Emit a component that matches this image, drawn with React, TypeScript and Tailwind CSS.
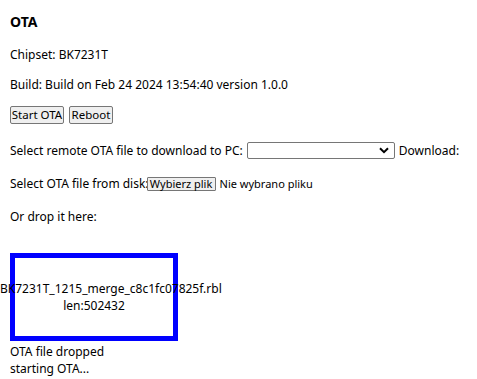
import React from 'react';

const App: React.FC = () => {
  return (
    <div
      className="min-h-[379px] w-[477px] overflow-hidden bg-white px-[10px] text-[12px] leading-[17px] text-black"
      style={{ fontFamily: '"Noto Sans", Arial, sans-serif' }}
    >
      <h3 className="pt-[12px] text-[14px] font-bold leading-[20px]">OTA</h3>

      <p className="mt-[14px]">Chipset: BK7231T</p>
      <p className="mt-[13px]">Build: Build on Feb 24 2024 13:54:40 version 1.0.0</p>

      <div className="mt-[13px] flex h-[18px] gap-[5px]">
        <button className="h-[18px] w-[54px] whitespace-nowrap rounded-[2px] border border-[#767676] bg-[#efefef] p-0 text-[11.5px] leading-[16px]">
          Start OTA
        </button>
        <button className="h-[18px] w-[44px] whitespace-nowrap rounded-[2px] border border-[#767676] bg-[#efefef] p-0 text-[11.5px] leading-[16px]">
          Reboot
        </button>
      </div>

      <div className="mt-[17px] flex h-[18px] items-center whitespace-nowrap">
        <span>Select remote OTA file to download to PC:</span>
        <div className="ml-[4px] flex h-[17px] w-[148px] items-center justify-end rounded-[2px] border border-[#767676] bg-white pr-[5px]">
          <svg width="10" height="7" viewBox="0 0 10 7" fill="none">
            <path d="M1 1.2 L5 5.2 L9 1.2" stroke="#000" strokeWidth="2" />
          </svg>
        </div>
        <span className="ml-[4px]">Download:</span>
      </div>

      <div className="mt-[16px] flex h-[17px] items-center whitespace-nowrap">
        <span>Select OTA file from disk:</span>
        <button className="ml-[-2px] h-[14px] w-[69px] whitespace-nowrap rounded-[1px] border border-[#767676] bg-[#efefef] p-0 text-[11px] leading-[12px]">
          Wybierz plik
        </button>
        <span className="ml-[4px] text-[11px]">Nie wybrano pliku</span>
      </div>

      <p className="mt-[16px]">Or drop it here:</p>

      <div className="mt-[28px] flex h-[88px] w-[168px] flex-col items-center justify-center border-[5px] border-[#0000ff] text-center">
        <div className="ml-[-15px] self-start whitespace-nowrap">BK7231T_1215_merge_c8c1fc07825f.rbl</div>
        <div>len:502432</div>
      </div>

      <div className="mt-[2px]">
        <div>OTA file dropped</div>
        <div>starting OTA...</div>
      </div>
    </div>
  );
};

export default App;
